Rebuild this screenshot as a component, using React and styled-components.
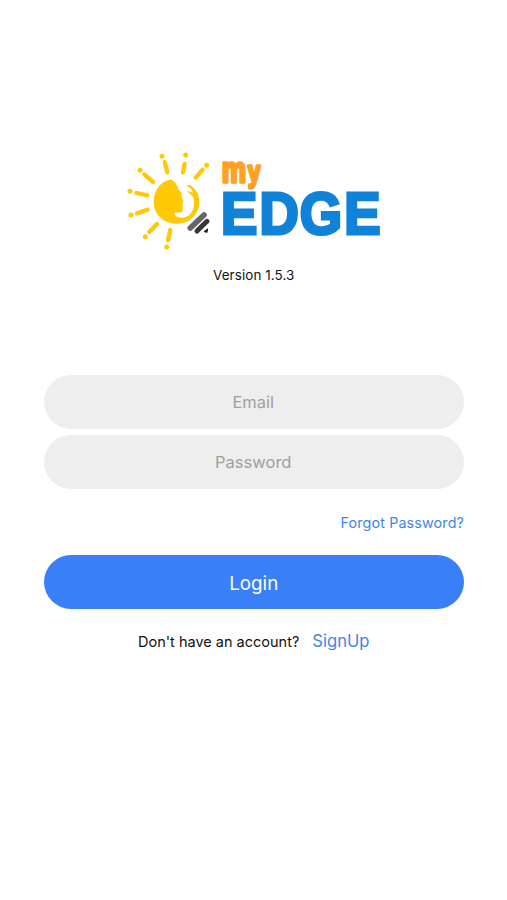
import React, { useState } from 'react';
import styled, { createGlobalStyle, css } from 'styled-components';

const GlobalStyle = createGlobalStyle`
body {
    margin: 0;
    background: #fff;
    font-family: Inter, "Liberation Sans", sans-serif;
}
`

const Screen = styled.main`
display: flex;
flex-direction: column;
align-items: center;
box-sizing: border-box;
height: 900px;
padding: 150px 43px 0 43.5px;
overflow: hidden;
`

const LogoImage = styled.svg`
display: block;
width: 260px;
height: 102px;
overflow: visible;
`

const EdgeText = styled.text`
font: 700 58.5px "Liberation Sans", Arial, sans-serif;
fill: #1083d9;
stroke: #1083d9;
stroke-width: 3.2px;
`

const MyText = styled.text`
font: 700 36px "Liberation Sans", Arial, sans-serif;
fill: #ffa126;
stroke: #ffa126;
stroke-width: 3.4px;
stroke-linejoin: round;
`

const SmallLetter = styled.tspan`
font-size: 29px;
`

const Version = styled.p`
margin: 14px 0 0;
font-size: 13.4px;
line-height: 18px;
letter-spacing: 0.1px;
color: #111;
`

const Form = styled.form`
display: flex;
flex-direction: column;
gap: 6px;
width: 100%;
margin-top: 91px;
`

const pill = css`
box-sizing: border-box;
width: 100%;
height: 54px;
border: 0;
border-radius: 27px;
font-family: inherit;
text-align: center;
`

const Field = styled.input`
${pill}
padding: 0 21px 1px 20px;
background: #eee;
color: #222;
font-size: 16.5px;
outline: none;

&::placeholder {
    color: #a0a0a0;
    opacity: 1;
}
`

const Link = styled.a`
color: #4384ec;
font-size: ${({ $size }) => $size};
letter-spacing: ${({ $spacing }) => $spacing || 'normal'};
line-height: 20px;
text-decoration: none;
cursor: pointer;
`

const ForgotRow = styled.div`
display: flex;
justify-content: flex-end;
margin-top: 18px;
`

const LoginButton = styled.button`
${pill}
margin-top: 16px;
padding: 2px 0 0;
background: #3980f8;
color: #fff;
font-size: 18.8px;
cursor: pointer;
`

// the row is shorter than its line, which trims the descenders
const SignUpRow = styled.div`
display: flex;
align-items: baseline;
gap: 13px;
margin-top: 22px;
height: 19px;
overflow: hidden;
`

const Question = styled.span`
font-size: 14.5px;
line-height: 20px;
color: #111;
`

// each ray is a short bar with a dot beyond its outer end
const rays = [
    { dot: [126, 34], bar: 'M134 51L142 82' },
    { dot: [197, 30], bar: 'M194 57L189 82' },
    { dot: [260, 61], bar: 'M248 74L227 98' },
    { dot: [60, 76], bar: 'M73 88L99 111' },
    { dot: [30, 139], bar: 'M49 144L82 151' },
    { dot: [33, 210], bar: 'M51 205L83 194' },
    { dot: [76, 275], bar: 'M88 261L111 237' },
    { dot: [140, 306], bar: 'M144 286L151 255' },
]

function Logo() {
    return (
        <LogoImage viewBox='124 150 260 102' role='img' aria-label='My EDGE'>
            <g transform='translate(120 145) scale(0.3333)'>
                <g fill='#ffc907' stroke='#ffc907' strokeLinecap='round'>
                    {rays.map(({ dot, bar }) => (
                        <g key={bar}>
                            <circle cx={dot[0]} cy={dot[1]} r='7.5' stroke='none' />
                            <path d={bar} strokeWidth='13' />
                        </g>
                    ))}
                </g>
                <path fill='#ffc907' d='M150 104C121 109 101 137 101 170C101 208 131 236 170 236C209 236 238 209 238 170C238 149 228 132 211 121C207 119 200 121 202 123C211 128 217 136 219 143C212 139 206 139 201 137C207 145 221 151 222 166C224 184 219 201 207 211C197 219 184 220 174 216C165 212 161 207 165 204C171 201 181 205 186 201C190 197 186 193 188 189C190 185 187 182 187 178C187 174 191 171 190 168C188 162 184 157 185 149C187 143 181 138 176 134C172 130 177 126 172 123C168 120 169 114 163 111C158 108 155 103 150 104Z' />
                <path stroke='#666' strokeWidth='17' strokeLinecap='round' d='M211 249L252 210' />
                <path stroke='#383838' strokeWidth='15' strokeLinecap='round' d='M231 258L261 229' />
                <path fill='#222' d='M251 259L263 250Q267 256 262 263Q257 265 251 259Z' />
            </g>
            <MyText transform='translate(221.8 181.7) scale(0.76 1)'>
                m<SmallLetter x='34.5'>y</SmallLetter>
            </MyText>
            <EdgeText transform='translate(221 233.6) scale(0.93 1)' x='0 41.3 84.7 132.6'>EDGE</EdgeText>
        </LogoImage>
    )
}

export default function App() {
    const [email, setEmail] = useState('')
    const [password, setPassword] = useState('')

    return (
        <>
            <GlobalStyle />
            <Screen>
                <Logo />
                <Version>Version 1.5.3</Version>
                <Form onSubmit={e => e.preventDefault()}>
                    <Field type='email' placeholder='Email' value={email} onChange={e => setEmail(e.target.value)} />
                    <Field type='password' placeholder='Password' value={password} onChange={e => setPassword(e.target.value)} />
                    <ForgotRow>
                        <Link $size='14.3px' $spacing='0.15px'>Forgot Password?</Link>
                    </ForgotRow>
                    <LoginButton type='submit'>Login</LoginButton>
                </Form>
                <SignUpRow>
                    <Question>Don't have an account?</Question>
                    <Link $size='16.6px'>SignUp</Link>
                </SignUpRow>
            </Screen>
        </>
    )
}
